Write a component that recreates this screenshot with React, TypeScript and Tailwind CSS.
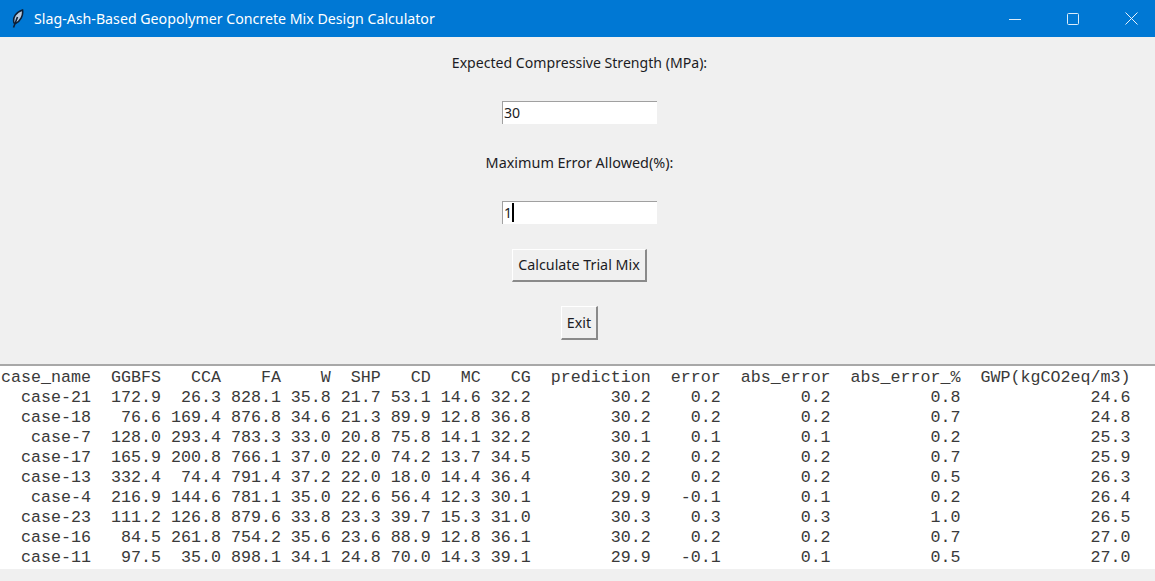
const headers = ["case_name", "GGBFS", "CCA", "FA", "W", "SHP", "CD", "MC", "CG", "prediction", "error", "abs_error", "abs_error_%", "GWP(kgCO2eq/m3)"];
const widths = [9, 7, 6, 6, 5, 5, 5, 5, 5, 12, 7, 11, 13, 17];

const rows = [
  ["case-21", "172.9", "26.3", "828.1", "35.8", "21.7", "53.1", "14.6", "32.2", "30.2", "0.2", "0.2", "0.8", "24.6"],
  ["case-18", "76.6", "169.4", "876.8", "34.6", "21.3", "89.9", "12.8", "36.8", "30.2", "0.2", "0.2", "0.7", "24.8"],
  ["case-7", "128.0", "293.4", "783.3", "33.0", "20.8", "75.8", "14.1", "32.2", "30.1", "0.1", "0.1", "0.2", "25.3"],
  ["case-17", "165.9", "200.8", "766.1", "37.0", "22.0", "74.2", "13.7", "34.5", "30.2", "0.2", "0.2", "0.7", "25.9"],
  ["case-13", "332.4", "74.4", "791.4", "37.2", "22.0", "18.0", "14.4", "36.4", "30.2", "0.2", "0.2", "0.5", "26.3"],
  ["case-4", "216.9", "144.6", "781.1", "35.0", "22.6", "56.4", "12.3", "30.1", "29.9", "-0.1", "0.1", "0.2", "26.4"],
  ["case-23", "111.2", "126.8", "879.6", "33.8", "23.3", "39.7", "15.3", "31.0", "30.3", "0.3", "0.3", "1.0", "26.5"],
  ["case-16", "84.5", "261.8", "754.2", "35.6", "23.6", "88.9", "12.8", "36.1", "30.2", "0.2", "0.2", "0.7", "27.0"],
  ["case-11", "97.5", "35.0", "898.1", "34.1", "24.8", "70.0", "14.3", "39.1", "29.9", "-0.1", "0.1", "0.5", "27.0"],
];

const formatRow = (cells: string[]) => cells.map((c, i) => c.padStart(widths[i])).join("");
const table = [headers, ...rows].map(formatRow).join("\n");

const Feather = () => (
  <svg width="16" height="20" viewBox="0 0 16 20" className="ml-[9px]">
    <path d="M5 14 C3.5 8.5 7 3 13.5 1 C14.5 6.5 11.5 12 6.5 14.5 Z" fill="#b8cadd" stroke="#0d1f36" strokeWidth="1.6" />
    <path d="M4.5 18.5 L8.5 8" stroke="#0d1f36" strokeWidth="1.6" fill="none" />
  </svg>
);

const Button = ({ label, className }: { label: string; className: string }) => (
  <div className={`flex items-center justify-center text-[14.3px] border-t border-l border-t-white border-l-white border-r-2 border-b-2 border-r-[#8a8a8a] border-b-[#8a8a8a] bg-[#f0f0f0] ${className}`}>
    {label}
  </div>
);

export default function App() {
  return (
    <div className="w-[1155px] h-[581px] overflow-hidden bg-[#f0f0f0] flex flex-col font-['Noto_Sans',sans-serif] text-[14.1px] text-[#1c1c24]">
      {/* Title bar */}
      <div className="h-[37px] bg-[#0078d4] flex items-center text-white shrink-0">
        <Feather />
        <span className="ml-[9px] text-[14.2px]">Slag-Ash-Based Geopolymer Concrete Mix Design Calculator</span>
        <div className="ml-auto flex items-center">
          <svg width="12" height="12" viewBox="0 0 12 12" className="mr-[46px]">
            <path d="M0 6.5 H12" stroke="#dcecf9" strokeWidth="1" />
          </svg>
          <svg width="12" height="12" viewBox="0 0 12 12" className="mr-[46px]">
            <rect x="0.5" y="0.5" width="11" height="11" rx="1" fill="none" stroke="#dcecf9" strokeWidth="1" />
          </svg>
          <svg width="13" height="13" viewBox="0 0 13 13" className="mr-[17px]">
            <path d="M0.5 0.5 L12.5 12.5 M12.5 0.5 L0.5 12.5" stroke="#e8f2fb" strokeWidth="1" />
          </svg>
        </div>
      </div>

      {/* Form */}
      <div className="flex flex-col items-center h-[327px] shrink-0 pl-[4px]">
        <div className="mt-[16px] h-[20px] leading-[20px]">Expected Compressive Strength (MPa):</div>
        <div className="mt-[28px] w-[155px] h-[23px] bg-white border-t border-l border-t-[#a0a0a0] border-l-[#a0a0a0] pl-[1px] leading-[22px]">30</div>
        <div className="mt-[29px] h-[20px] leading-[20px] text-[14.4px]">Maximum Error Allowed(%):</div>
        <div className="mt-[28px] w-[155px] h-[23px] bg-white border-t border-l border-t-[#a0a0a0] border-l-[#a0a0a0] pl-[1px] leading-[22px] flex">
          <span>1</span>
          <span className="w-[2px] h-[19px] mt-[1px] bg-black" />
        </div>
        <Button label="Calculate Trial Mix" className="mt-[25px] w-[135px] h-[33px]" />
        <Button label="Exit" className="mt-[24px] w-[37px] h-[34px]" />
      </div>

      {/* Results */}
      <div className="h-[205px] bg-white border-t-2 border-t-[#a8a8a8] shrink-0 overflow-hidden">
        <pre className="pl-[1px] pt-[2px] font-['Liberation_Mono',monospace] text-[16.67px] leading-[20px] text-[#3a3a3a]">{table}</pre>
      </div>
    </div>
  );
}
